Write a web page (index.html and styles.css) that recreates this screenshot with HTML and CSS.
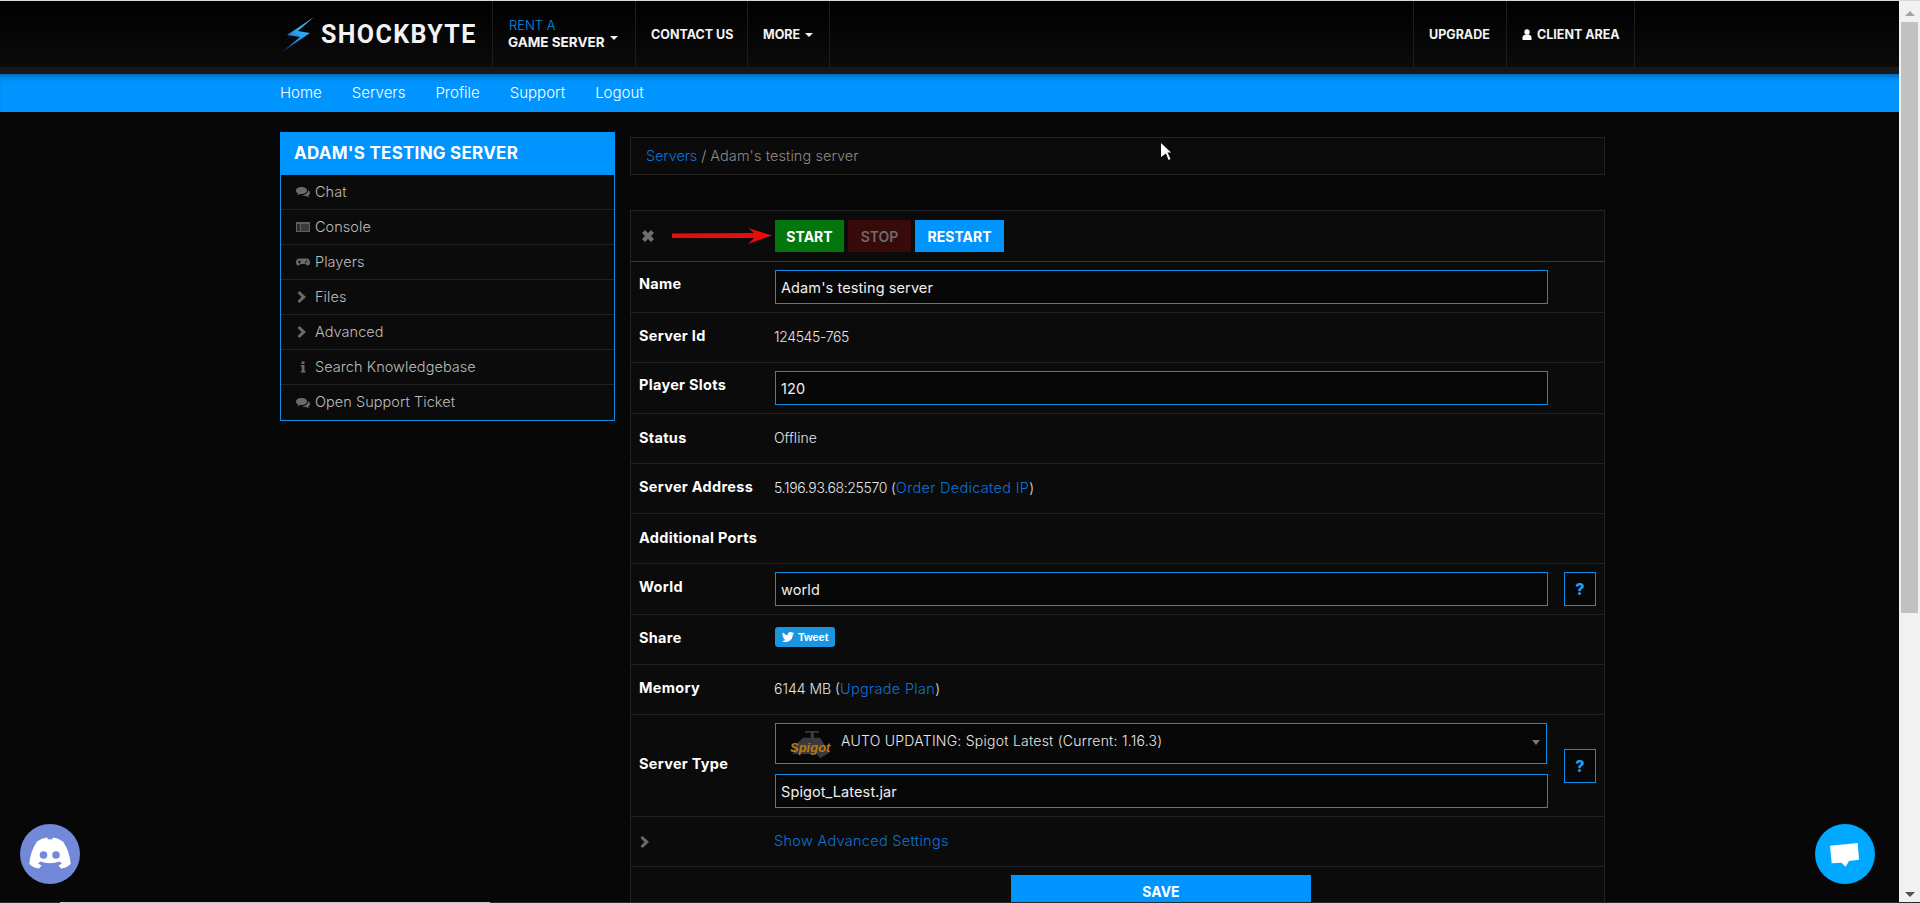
FILE: index.html
```html
<!DOCTYPE html>
<html lang="en">
<head>
<meta charset="utf-8">
<title>Adam's testing server</title>
<link rel="stylesheet" href="styles.css">
</head>
<body>
<div class="topline"></div>
<div class="window">
  <div class="page">
    <header class="header">
      <div class="header-inner">
        <a class="logo">
          <svg class="bolt" viewBox="0 0 40 38"><defs><linearGradient id="bg" x1="1" y1="0" x2="0" y2="1"><stop offset="0" stop-color="#43c8f5"/><stop offset=".5" stop-color="#2a9cf0"/><stop offset="1" stop-color="#0a4f9c"/></linearGradient></defs><polygon fill="url(#bg)" points="35,0 8,18 21,20 3,35 31,16 19,14"/></svg>
          <span class="logo-text">SHOCKBYTE</span>
        </a>
        <div class="nav-item w-rent"><div class="rent-wrap"><div class="rent">RENT A</div><div class="strong game">GAME SERVER <i class="caret up"></i></div></div></div>
        <div class="nav-item w-contact"><span class="strong">CONTACT US</span></div>
        <div class="nav-item w-more end"><span class="strong">MORE <i class="caret"></i></span></div>
        <div class="spacer"></div>
        <div class="nav-item w-upgrade"><span class="strong">UPGRADE</span></div>
        <div class="nav-item w-client end"><span class="strong"><svg class="user" viewBox="0 0 10 11"><circle cx="5" cy="3" r="2.7" fill="#fff"/><path d="M0.5 11V8.2C0.5 6.6 2 6 3.2 5.4H6.8C8 6 9.5 6.6 9.5 8.2V11Z" fill="#fff"/></svg> CLIENT AREA</span></div>
      </div>
    </header>
    <div class="band"></div>
    <nav class="bluebar">
      <a>Home</a><a>Servers</a><a>Profile</a><a>Support</a><a>Logout</a>
    </nav>
    <main class="main">
      <aside class="sidebar">
        <h2 class="side-title">ADAM'S TESTING SERVER</h2>
        <ul class="side-list">
          <li><svg class="ico" viewBox="0 0 14 12"><use href="#i-chat"/></svg><span>Chat</span></li>
          <li><svg class="ico" viewBox="0 0 14 12"><path fill="#5f5f5f" d="M0 1h14v10H0z"/><path fill="#2c2c2c" d="M1 3h3v7H1z"/><path fill="#3a3a3a" d="M5 3h8v7H5z"/></svg><span>Console</span></li>
          <li><svg class="ico" viewBox="0 0 14 12"><path fill="#6a6a6a" d="M3.5 2.5h7C13 2.500 14 4.500 14 6.500c0 2-1 3-2 3-1.500 0-2-1.500-3-1.500H5c-1 0-1.500 1.500-3 1.500-1 0-2-1-2-3 0-2 1-4 3.500-4z"/><path fill="#0b0b0b" d="M3 4.500h1v1h1v1H4v1H3v-1H2v-1h1zM10 4.500h1.200v1.200H10zM8.800 6h1.200v1.200H8.800z"/></svg><span>Players</span></li>
          <li><svg class="ico" viewBox="0 0 14 12"><use href="#i-chev"/></svg><span>Files</span></li>
          <li><svg class="ico" viewBox="0 0 14 12"><use href="#i-chev"/></svg><span>Advanced</span></li>
          <li><svg class="ico" viewBox="0 0 14 12"><path fill="#6a6a6a" d="M5.500 0.500h3v2.500h-3zM4.800 4h3.700v6h1v1.500H4.800V10h1V5.500h-1z"/></svg><span>Search Knowledgebase</span></li>
          <li><svg class="ico" viewBox="0 0 14 12"><use href="#i-chat"/></svg><span>Open Support Ticket</span></li>
        </ul>
      </aside>
      <section class="content">
        <div class="crumb"><a class="link">Servers</a> <span class="sl">/</span> <span class="cur">Adam's testing server</span></div>
        <div class="panel">
          <div class="toolbar">
            <svg class="x" viewBox="0 0 12 12"><path fill="#6e6e6e" d="M3 0 6 3 9 0 12 3 9 6 12 9 9 12 6 9 3 12 0 9 3 6 0 3Z"/></svg>
            <svg class="arrow" viewBox="0 0 100 16"><path fill="#e90c0c" d="M0 5.500 82 5 76 0 100 7.500 76 16 82 10 0 10Z"/></svg>
            <button class="btn start">START</button>
            <button class="btn stop">STOP</button>
            <button class="btn restart">RESTART</button>
          </div>
          <div class="row"><label class="lab lift-f">Name</label><div class="field">Adam's testing server</div></div>
          <div class="row tall"><label class="lab lift">Server Id</label><div class="val num">124545-765</div></div>
          <div class="row"><label class="lab lift-f">Player Slots</label><div class="field">120</div></div>
          <div class="row tall"><label class="lab">Status</label><div class="val">Offline</div></div>
          <div class="row tall"><label class="lab lift">Server Address</label><div class="val"><span class="num">5.196.93.68:25570</span> (<a class="link">Order Dedicated IP</a>)</div></div>
          <div class="row tall"><label class="lab">Additional Ports</label><div></div></div>
          <div class="row"><label class="lab lift">World</label><div class="field">world</div><button class="help">?</button></div>
          <div class="row tall"><label class="lab lift">Share</label><div class="val share"><a class="tweet"><svg class="bird" viewBox="0 0 24 20"><path fill="#fff" d="M24 2.400c-.9.400-1.800.7-2.800.8 1-.6 1.800-1.600 2.200-2.700-1 .6-2 1-3.100 1.200A4.900 4.900 0 0 0 11.900 6.200C7.800 6 4.200 4 1.700.9A4.900 4.900 0 0 0 3.200 7.500c-.8 0-1.600-.2-2.200-.6 0 2.400 1.700 4.400 3.900 4.900-.7.200-1.500.2-2.200.1.600 1.900 2.400 3.300 4.600 3.400A9.900 9.900 0 0 1 0 17.800 14 14 0 0 0 21.500 5.400c1-.7 1.800-1.600 2.500-3z"/></svg>Tweet</a></div></div>
          <div class="row tall"><label class="lab lift">Memory</label><div class="val">6144 MB (<a class="link">Upgrade Plan</a>)</div></div>
          <div class="row type">
            <label class="lab lift-t">Server Type</label>
            <div class="stack">
              <div class="select">
                <svg class="spigot" viewBox="0 0 44 32"><path fill="#3a3a3a" d="M17 3h14v1.800h-5V9.700h6L41.300 24.700 32 30.300 28.700 26H5L6 18l9.300-8.300H22.700V4.800H17z"/><text class="spigot-text" x="2" y="24">Spigot</text></svg>
                <span class="opt">AUTO UPDATING: Spigot Latest (Current: 1.16.3)</span>
                <i class="sel-caret"></i>
              </div>
              <div class="field">Spigot_Latest.jar</div>
            </div>
            <button class="help">?</button>
          </div>
          <div class="row tall"><svg class="chev" viewBox="0 0 14 12"><use href="#i-chev"/></svg><div class="val"><a class="link">Show Advanced Settings</a></div></div>
          <div class="save-row"><button class="save">SAVE</button></div>
        </div>
      </section>
    </main>
    <svg class="cursor" viewBox="0 0 12 18"><path fill="#fff" d="M0 0 10 9.500H6.500L9.500 16 7.500 17 5 10.500 0 14z"/></svg>
    <a class="bubble discord"><svg viewBox="0 0 60 60"><path fill="#fff" d="M17 17.500Q22 14.200 27 13.500L28 15.500Q30 15.200 32 15.500L33 13.500Q38 14.200 43 17.500Q50 28 50.700 40Q46.500 44 41 44.500L38.500 41.500 42 39.500 39.500 37.500Q30 41 20.500 37.500L18 39.500 21.500 41.500 19 44.500Q13.500 44 9.300 40Q10 28 17 17.500Z"/><circle cx="23.500" cy="31" r="3.800" fill="#7289da"/><circle cx="36" cy="31" r="3.800" fill="#7289da"/></svg></a>
    <a class="bubble chat"><svg viewBox="0 0 60 60"><path fill="#fff" d="M15 21.700 42.700 19 44 35.700 34 37 30.700 42.700 26.300 38.700 16.700 39.300z"/></svg></a>
  </div>
  <div class="scrollbar">
    <i class="sc-up"></i>
    <div class="thumb"></div>
    <i class="sc-down"></i>
  </div>
</div>
<div class="tail"><span class="tail-a"></span><span class="tail-b"></span></div>
<svg class="defs" width="0" height="0"><defs>
  <g id="i-chat"><path fill="#6a6a6a" d="M5.500 1C8.500 1 11 2.500 11 4.500S8.500 8 5.500 8L4 8 1.500 9.500 2.200 7.500C.8 6.800 0 5.700 0 4.500 0 2.500 2.500 1 5.500 1z"/><path fill="#6a6a6a" d="M12 4.200C13.200 4.900 14 5.900 14 7c0 1.100-.7 2-1.800 2.600L13 11.500 10.200 10C8.500 10 7 9.700 5.800 9 9.500 9 12 7 12 4.200z"/></g>
  <path id="i-chev" fill="#6a6a6a" d="M3.500 0 10 6 3.500 12 1.500 10 5.500 6 1.500 2z"/>
</defs></svg>
</body>
</html>
```
FILE: styles.css
```css
* { box-sizing: border-box; }
html, body { margin: 0; padding: 0; height: 903px; overflow: hidden; background: #070707; }
body { font-family: Inter, "Open Sans", sans-serif; font-weight: 300; font-size: 14px; color: #ddd; }
a { text-decoration: none; }
.defs { position: absolute; }
.topline { height: 1px; background: #d8d8d8; }
.window { display: flex; height: 901px; }
.page { position: relative; flex: 1; min-width: 0; overflow: hidden; background: #070707; }

.header { height: 66px; background: linear-gradient(#000, #0b0b0b); }
.header-inner { display: flex; height: 100%; padding-left: 280px; width: 1635px; }
.logo { width: 213px; display: flex; align-items: center; margin-left: -1px; }
.bolt { width: 40px; height: 38px; margin-top: 3px; }
.logo-text { font-family: Roboto, sans-serif; font-weight: 700; font-size: 25px; color: #f2f2f2; margin-left: 2px; margin-top: 0; letter-spacing: 1.4px; }
.nav-item { display: flex; align-items: center; border-left: 1px solid #1c1c1c; padding-left: 15px; flex: none; }
.nav-item.end { border-right: 1px solid #1c1c1c; }
.w-rent { width: 143px; }
.w-contact { width: 112px; }
.w-more { width: 83px; }
.w-upgrade { width: 93px; }
.w-client { width: 129px; }
.spacer { flex: 1; }
.strong { font-weight: 700; font-size: 12.5px; color: #f4f4f4; white-space: nowrap; }
.rent-wrap { margin-top: -4px; }
.game { font-size: 13.5px; }
.rent { color: #0a8ee8; font-size: 13px; line-height: 17px; margin-top: 2px; padding-left: 1px; }
.caret { display: inline-block; border: 4px solid transparent; border-top-color: #f4f4f4; border-bottom: 0; vertical-align: middle; margin-left: 2px; }
.caret.up { position: relative; top: -5px; }
.user { width: 10px; height: 11px; vertical-align: -1px; margin-right: 2px; }

.band { height: 7px; background: #181818; }
.bluebar { height: 38px; background: #0094ff; box-shadow: inset 0 6px 6px -4px rgba(0,0,0,.35); padding-left: 280px; display: flex; align-items: center; gap: 30px; font-size: 15px; font-weight: 300; color: #fff; }
.bluebar a { margin-top: -1px; }

.main { display: flex; padding: 20px 0 0 280px; gap: 15px; align-items: flex-start; }
.sidebar { width: 335px; flex: none; }
.side-title { margin: 0; height: 42px; line-height: 42px; background: #0094ff; color: #fff; font-size: 17px; font-weight: 700; padding-left: 14px; letter-spacing: .25px; }
.side-list { list-style: none; margin: 0; padding: 0; border: 1px solid #0a8ee8; background: #0b0b0b; }
.side-list li { height: 35px; display: flex; align-items: center; padding-left: 15px; border-bottom: 1px solid #222; color: #bdbdbd; font-size: 14.5px; letter-spacing: .05px; }
.side-list li span { margin-top: -2px; }
.side-list li:last-child { border-bottom: 0; }
.ico { width: 14px; height: 12px; margin-right: 5px; flex: none; }

.content { width: 975px; flex: none; padding-top: 5px; }
.crumb { height: 38px; border: 1px solid #222; background: #0b0b0b; padding-left: 15px; display: flex; align-items: center; gap: 4px; font-size: 14.5px; }
.crumb > * { margin-top: -2px; }
.crumb .link { letter-spacing: -.1px; }
.cur { letter-spacing: .08px; }
.link { color: #0a74d6; }
.val .link { font-size: 14.5px; letter-spacing: .3px; }
.sl { color: #9a9a9a; }
.cur { color: #8a8a8a; }
.panel { margin-top: 35px; border: 1px solid #222; border-bottom: 0; background: #0b0b0b; }
.toolbar { height: 51px; border-bottom: 1px solid #3a3a3a; display: flex; align-items: center; gap: 4px; }
.x { width: 12px; height: 12px; margin-left: 11px; }
.arrow { width: 100px; height: 16px; margin: 0 -1px 0 14px; }
.btn { height: 32px; border: 0; font-family: inherit; font-weight: 700; font-size: 14px; padding: 0; color: #fff; }
.start { width: 69px; background: #04760e; }
.stop { width: 63px; background: #380a0a; color: #6c6c6c; font-weight: 600; }
.restart { width: 89px; background: #0094ff; }

.row { display: grid; grid-template-columns: 136px 773px 48px; align-items: center; padding: 8px 0 8px 8px; border-bottom: 1px solid #222; }
.row.tall { min-height: 50px; }
.lab { font-weight: 700; font-size: 14.5px; letter-spacing: .3px; color: #fff; white-space: nowrap; margin-top: -2px; }
.lift { margin-top: -5px; }
.lift-f { margin-top: -7px; }
.lift-t { margin-top: -4px; }
.val { font-size: 14px; color: #e4e4e4; margin: -2px 0 0 -1px; }
.num { letter-spacing: -.35px; }
.share { margin: -5px 0 0 0; }
.field { height: 34px; border: 1px solid #0a8ee8; background: #070707; display: flex; align-items: center; padding-left: 5px; font-size: 14.5px; font-weight: 400; color: #f0f0f0; letter-spacing: .1px; }
.help { justify-self: end; width: 32px; height: 34px; border: 1px solid #0a8ee8; background: #070707; color: #1ea0f0; font-family: inherit; font-weight: 800; font-size: 16px; padding: 0; }
.tweet { display: inline-flex; align-items: center; width: 60px; height: 20px; background: #1b95e0; border-radius: 3px; padding-left: 7px; font-family: "Liberation Sans", sans-serif; font-size: 11px; font-weight: 700; color: #fff; vertical-align: middle; }
.bird { width: 12px; height: 10px; margin-right: 4px; }
.stack { display: flex; flex-direction: column; gap: 10px; }
.select { position: relative; width: 772px; height: 41px; border: 1px solid #0a8ee8; background: #070707; display: flex; align-items: center; padding-left: 12px; }
.spigot { width: 44px; height: 32px; flex: none; }
.spigot-text { font-family: "Liberation Sans", sans-serif; font-style: italic; font-weight: 700; font-size: 13px; fill: #b87a12; }
.opt { margin-left: 9px; margin-top: -6px; font-size: 14px; letter-spacing: .25px; color: #e8e8e8; }
.sel-caret { position: absolute; right: 6px; top: 16px; border: 4px solid transparent; border-top: 5px solid #777; border-bottom: 0; }
.chev { width: 14px; height: 12px; }
.save-row { height: 60px; padding: 8px 0 0 380px; display: flex; }
.save { width: 300px; height: 52px; border: 0; background: #0094ff; color: #fff; font-family: inherit; font-weight: 700; font-size: 14px; padding: 0 0 20px; }

.cursor { position: absolute; left: 1161px; top: 142px; width: 12px; height: 18px; }
.bubble { position: absolute; top: 823px; width: 60px; height: 60px; border-radius: 50%; display: block; }
.bubble svg { width: 60px; height: 60px; display: block; }
.discord { left: 20px; background: #7289da; }
.chat { left: 1815px; background: #00a8ff; }

.scrollbar { width: 21px; flex: none; background: #f1f1f1; display: flex; flex-direction: column; align-items: center; }
.sc-up { margin-top: 10px; border: 5px solid transparent; border-bottom: 5px solid #a3a3a3; border-top: 0; }
.thumb { width: 17px; height: 591px; background: #c1c1c1; margin-top: 6px; }
.sc-down { margin-top: auto; margin-bottom: 5px; border: 5px solid transparent; border-top: 5px solid #505050; border-bottom: 0; }

.tail { height: 1px; display: flex; background: #2a2a2a; }
.tail-a { width: 60px; }
.tail-b { width: 430px; background: #c8c8c8; }
```
